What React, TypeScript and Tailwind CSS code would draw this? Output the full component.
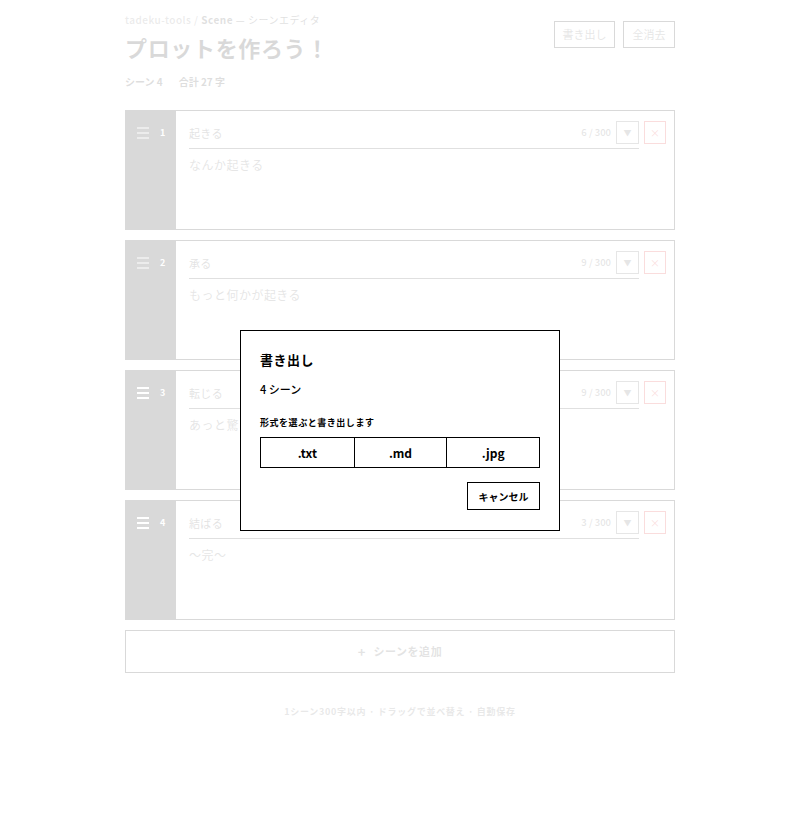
import React from 'react';

interface Scene {
  title: string;
  body: string;
  bold?: boolean;
}

const scenes: Scene[] = [
  { title: '起きる', body: 'なんか起きる' },
  { title: '承る', body: 'もっと何かが起きる' },
  { title: '転じる', body: 'あっと驚く急展開！', bold: true },
  { title: '結ばる', body: '〜完〜', bold: true },
];

function Handle({ bold }: { bold?: boolean }) {
  const w = bold ? 2 : 1;
  return (
    <svg width="12" height="12" viewBox="0 0 12 12" className="block">
      <line x1="0" y1="1" x2="12" y2="1" stroke="white" strokeWidth={w} />
      <line x1="0" y1="6" x2="12" y2="6" stroke="white" strokeWidth={w} />
      <line x1="0" y1="11" x2="12" y2="11" stroke="white" strokeWidth={w} />
    </svg>
  );
}

function SceneCard({ scene, index }: { scene: Scene; index: number }) {
  const count = [...scene.body].length;
  return (
    <div className="flex h-[120px] border border-black bg-white">
      {/* drag handle */}
      <div className="w-[50px] shrink-0 bg-black pl-[11px] pt-[16px]">
        <div className="flex items-center gap-[11px]">
          <Handle bold={scene.bold} />
          <span className="text-[9px] font-bold leading-[12px] text-white">{index + 1}</span>
        </div>
      </div>
      <div className="flex-1 pl-[13px] pr-[8px] pt-[10px]">
        <div className="flex items-start gap-[5px]">
          <div className="flex flex-1 items-center gap-[5px] border-b border-[#333] pb-[4px]">
            <span className="flex-1 text-[11px] leading-[16px] tracking-[0.03em] text-[#444]">{scene.title}</span>
            <span className="text-[9.5px] font-medium text-[#555]">{count} / 300</span>
            <button className="flex h-[23px] w-[23px] items-center justify-center border border-[#555] text-[8px] text-[#555]">
              ▼
            </button>
          </div>
          <button className="flex h-[23px] w-[22px] items-center justify-center border border-[#e01b1b] text-[10px] text-[#e01b1b]">
            ×
          </button>
        </div>
        <p className="mt-[6px] text-[12px] leading-[20px] tracking-[0.04em] text-[#555]">{scene.body}</p>
      </div>
    </div>
  );
}

export default function App() {
  const total = scenes.reduce((n, s) => n + [...s.body].length, 0);

  return (
    <div className="relative min-h-[834px] bg-white font-['Noto_Sans_CJK_JP','Noto_Sans',sans-serif] text-black">
      <div className="w-[675px] pl-[125px] pt-[13px]">
        {/* header */}
        <div className="flex items-start justify-between">
          <div>
            <p className="text-[10px] leading-[14px] tracking-[0.05em]">
              <span className="font-medium text-[#777]">tadeku-tools / </span>
              <span className="font-bold text-[#333]">Scene</span>
              <span className="text-[#333]"> — シーンエディタ</span>
            </p>
            <h1 className="mt-[4px] text-[22px] font-bold leading-[32px] tracking-[0.03em]">
              プロットを作ろう！
            </h1>
            <p className="mt-[11px] flex gap-[16px] text-[10px] font-bold leading-[16px] text-[#222]">
              <span>シーン 4</span>
              <span>合計 {total} 字</span>
            </p>
          </div>
          <div className="mt-[8px] flex gap-[8px]">
            <button className="h-[27px] w-[61px] border border-black text-[11px] text-[#555]">書き出し</button>
            <button className="h-[27px] w-[52px] border border-black text-[11px] text-[#555]">全消去</button>
          </div>
        </div>

        {/* scenes */}
        <div className="mt-[20px] flex flex-col gap-[10px]">
          {scenes.map((s, i) => (
            <SceneCard key={i} scene={s} index={i} />
          ))}
        </div>

        <button className="mt-[10px] flex h-[43px] w-full items-center justify-center gap-[8px] border border-black text-[11px] font-bold text-[#444]">
          <span className="text-[13px]">+</span>
          <span className="tracking-[0.05em]">シーンを追加</span>
        </button>

        <p className="mt-[32px] text-center text-[9px] font-bold leading-[14px] tracking-[0.08em] text-[#666]">
          1シーン300字以内 · ドラッグで並べ替え · 自動保存
        </p>
      </div>

      {/* modal backdrop */}
      <div className="absolute inset-0 bg-white/85" />

      <div className="absolute left-[240px] top-[330px] h-[201px] w-[320px] border border-black bg-white px-[19px] pt-[19px]">
        <h2 className="text-[13px] font-bold leading-[20px] tracking-[0.04em]">書き出し</h2>
        <p className="mt-[10px] text-[11px] font-medium leading-[18px]">4 シーン</p>
        <p className="mt-[18px] text-[9px] font-bold leading-[14px] tracking-[0.06em]">形式を選ぶと書き出します</p>
        <div className="mt-[7px] grid h-[31px] grid-cols-3 border border-black">
          <button className="text-[12px] font-bold">.txt</button>
          <button className="border-l border-black text-[12px] font-bold">.md</button>
          <button className="border-l border-black text-[12px] font-bold">.jpg</button>
        </div>
        <div className="mt-[14px] flex justify-end">
          <button className="h-[28px] w-[73px] border border-black text-[10px] font-bold">キャンセル</button>
        </div>
      </div>
    </div>
  );
}
